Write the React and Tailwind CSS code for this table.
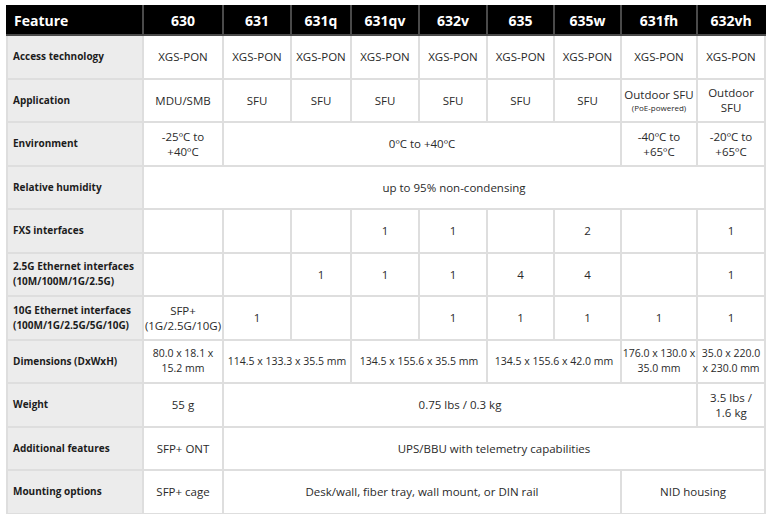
import React from 'react';

const models = ['630', '631', '631q', '631qv', '632v', '635', '635w', '631fh', '632vh'];
const colWidths = [136, 80, 68, 60, 68, 68, 67, 67, 76, 68];

const two = (a, b) => (
    <>
        {a}
        <br />
        {b}
    </>
);

// each cell: [content, colSpan]
const rows = [
    { label: 'Access technology', cells: models.map(() => ['XGS-PON', 1]) },
    {
        label: 'Application',
        cells: [
            ['MDU/SMB', 1],
            ['SFU', 1],
            ['SFU', 1],
            ['SFU', 1],
            ['SFU', 1],
            ['SFU', 1],
            ['SFU', 1],
            [
                <>
                    <span className="block">Outdoor SFU</span>
                    <span className="block text-[8px] leading-[12px]">(PoE-powered)</span>
                </>,
                1,
            ],
            [two('Outdoor', 'SFU'), 1],
        ],
    },
    {
        label: 'Environment',
        cells: [
            [two('-25ºC to', '+40ºC'), 1],
            ['0ºC to +40ºC', 6],
            [two('-40ºC to', '+65ºC'), 1],
            [two('-20ºC to', '+65ºC'), 1],
        ],
    },
    { label: 'Relative humidity', cells: [['up to 95% non-condensing', 9]] },
    {
        label: 'FXS interfaces',
        cells: ['', '', '', '1', '1', '', '2', '', '1'].map((v) => [v, 1]),
    },
    {
        label: two('2.5G Ethernet interfaces', '(10M/100M/1G/2.5G)'),
        cells: ['', '', '1', '1', '1', '4', '4', '', '1'].map((v) => [v, 1]),
    },
    {
        label: two('10G Ethernet interfaces', '(100M/1G/2.5G/5G/10G)'),
        cells: [
            [two('SFP+', '(1G/2.5G/10G)'), 1],
            ['1', 1],
            ['', 1],
            ['', 1],
            ['1', 1],
            ['1', 1],
            ['1', 1],
            ['1', 1],
            ['1', 1],
        ],
    },
    {
        label: 'Dimensions (DxWxH)',
        small: true,
        cells: [
            [two('80.0 x 18.1 x', '15.2 mm'), 1],
            ['114.5 x 133.3 x 35.5 mm', 2],
            ['134.5 x 155.6 x 35.5 mm', 2],
            ['134.5 x 155.6 x 42.0 mm', 2],
            [two('176.0 x 130.0 x', '35.0 mm'), 1],
            [two('35.0 x 220.0', 'x 230.0 mm'), 1],
        ],
    },
    {
        label: 'Weight',
        cells: [
            ['55 g', 1],
            ['0.75 lbs / 0.3 kg', 7],
            [two('3.5 lbs /', '1.6 kg'), 1],
        ],
    },
    {
        label: 'Additional features',
        cells: [
            ['SFP+ ONT', 1],
            ['UPS/BBU with telemetry capabilities', 8],
        ],
    },
    {
        label: 'Mounting options',
        cells: [
            ['SFP+ cage', 1],
            ['Desk/wall, fiber tray, wall mount, or DIN rail', 6],
            ['NID housing', 2],
        ],
    },
];

const App = () => {
    return (
        <div
            className="w-[766px] h-[514px] bg-white pl-[6px] pt-[5px] overflow-hidden"
            style={{ fontFamily: '"Open Sans", "Liberation Sans", sans-serif' }}
        >
            <table className="table-fixed border-collapse w-[758px]">
                <colgroup>
                    {colWidths.map((w, i) => (
                        <col key={i} style={{ width: w }} />
                    ))}
                </colgroup>
                <thead>
                    <tr className="h-[29px] bg-black text-white">
                        <th className="border-2 border-[#4a4a4a] border-t-black border-l-black text-left pl-[6px] text-[14px] font-bold">
                            Feature
                        </th>
                        {models.map((m, i) => (
                            <th
                                key={m}
                                className={
                                    'border-2 border-[#4a4a4a] border-t-black text-center text-[14px] font-bold' +
                                    (i === models.length - 1 ? ' border-r-black' : '')
                                }
                            >
                                {m}
                            </th>
                        ))}
                    </tr>
                </thead>
                <tbody>
                    {rows.map((row, ri) => (
                        <tr key={ri} className="h-[43.5px]">
                            <td className="border-2 border-[#dedede] bg-[#ececec] pl-[5px] text-[10px] font-bold leading-[15px] text-[#1c1c1c] whitespace-nowrap overflow-hidden">
                                {row.label}
                            </td>
                            {row.cells.map(([content, span], ci) => (
                                <td
                                    key={ci}
                                    colSpan={span}
                                    className={
                                        'border-2 border-[#dedede] text-center leading-[15px] text-[#2a2a2a] whitespace-nowrap overflow-hidden ' +
                                        (row.small ? 'text-[10.5px]' : 'text-[11.5px]')
                                    }
                                >
                                    {content}
                                </td>
                            ))}
                        </tr>
                    ))}
                </tbody>
            </table>
        </div>
    );
};

export default App;
